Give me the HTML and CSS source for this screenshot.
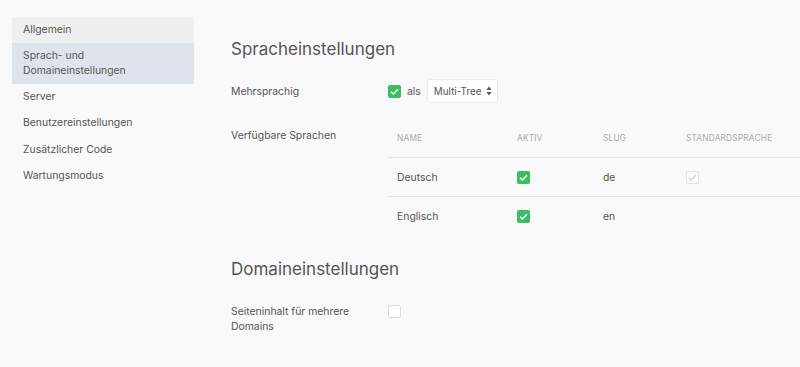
FILE: index.html
```html
<!DOCTYPE html>
<html lang="de">
<head>
<meta charset="utf-8">
<link rel="stylesheet" href="styles.css">
</head>
<body>
<div class="layout">
  <nav class="sidebar">
    <a class="nav-item nav-hover">Allgemein</a>
    <a class="nav-item nav-active">Sprach- und<br>Domaineinstellungen</a>
    <a class="nav-item">Server</a>
    <a class="nav-item">Benutzereinstellungen</a>
    <a class="nav-item">Zusätzlicher Code</a>
    <a class="nav-item">Wartungsmodus</a>
  </nav>
  <main class="main">
    <h2 class="section-title">Spracheinstellungen</h2>
    <div class="form-row row-multi">
      <div class="label">Mehrsprachig</div>
      <div class="control inline">
        <span class="cb cb-on"><svg viewBox="0 0 13 13"><path d="M3 6.8l2.3 2.2L10 4.3" fill="none" stroke="#fff" stroke-width="1.5"/></svg></span>
        <span class="als">als</span>
        <span class="select">Multi-Tree<svg class="arrows" viewBox="0 0 6 10"><path d="M3 0.5L5.6 4H0.4z M3 9.5L5.6 6H0.4z" fill="#555"/></svg></span>
      </div>
    </div>
    <div class="form-row row-lang">
      <div class="label">Verfügbare Sprachen</div>
      <div class="control table">
        <div class="tr th">
          <div class="c1">NAME</div><div class="c2">AKTIV</div><div class="c3">SLUG</div><div class="c4">STANDARDSPRACHE</div>
        </div>
        <div class="tr">
          <div class="c1">Deutsch</div>
          <div class="c2"><span class="cb cb-on"><svg viewBox="0 0 13 13"><path d="M3 6.8l2.3 2.2L10 4.3" fill="none" stroke="#fff" stroke-width="1.5"/></svg></span></div>
          <div class="c3">de</div>
          <div class="c4"><span class="cb cb-dis"><svg viewBox="0 0 13 13"><path d="M3 6.8l2.3 2.2L10 4.3" fill="none" stroke="#ccc" stroke-width="1.2"/></svg></span></div>
        </div>
        <div class="tr">
          <div class="c1">Englisch</div>
          <div class="c2"><span class="cb cb-on"><svg viewBox="0 0 13 13"><path d="M3 6.8l2.3 2.2L10 4.3" fill="none" stroke="#fff" stroke-width="1.5"/></svg></span></div>
          <div class="c3">en</div>
          <div class="c4"></div>
        </div>
      </div>
    </div>
    <h2 class="section-title title-2">Domaineinstellungen</h2>
    <div class="form-row row-domain">
      <div class="label">Seiteninhalt für mehrere<br>Domains</div>
      <div class="control"><span class="cb cb-off"></span></div>
    </div>
  </main>
</div>
</body>
</html>
```
FILE: styles.css
```css
* { box-sizing: border-box; }
html, body { margin: 0; padding: 0; }
body {
  background: #f9f9fb;
  font-family: Inter, "Noto Sans", sans-serif;
  font-size: 10.4px;
  color: #555;
  width: 800px;
  height: 367px;
  overflow: hidden;
}
.layout { display: flex; }
.sidebar {
  width: 182px;
  margin-left: 12px;
  padding-top: 17px;
  display: flex;
  flex-direction: column;
}
.nav-item {
  display: block;
  padding: 5.83px 11px;
  line-height: 14.67px;
  color: #555;
}
.nav-hover { background: #efefef; }
.nav-active { background: #dfe4ec; }
.main {
  padding-left: 37px;
  flex: 1;
}
.section-title {
  font-weight: 400;
  font-size: 17px;
  line-height: 24px;
  margin: 37px 0 0;
  color: #555;
}
.title-2 { margin-top: 22px; }
.form-row { display: flex; }
.label { width: 157px; flex: none; line-height: 15px; }
.row-multi { margin-top: 18px; align-items: center; }
.row-lang { margin-top: 16px; }
.row-lang .label { padding-top: 9px; }
.row-domain { margin-top: 23px; }
.inline { display: flex; align-items: center; }
.cb {
  display: inline-block;
  width: 13px;
  height: 13px;
  border-radius: 2px;
  vertical-align: middle;
}
.cb svg { display: block; width: 13px; height: 13px; }
.cb-on { background: #3dbd62; }
.cb-dis { border: 1px solid #e4e4e4; background: #fbfbfb; }
.cb-dis svg { margin: -1px; }
.cb-off { border: 1px solid #dcdcdc; background: #fff; }
.als { margin-left: 6px; }
.select {
  margin-left: 6px;
  width: 71px;
  height: 24px;
  background: #fff;
  border: 1px solid #ececec;
  border-radius: 3px;
  display: flex;
  align-items: center;
  padding-left: 6px;
  white-space: nowrap;
  font-size: 9.9px;
}
.arrows { width: 6px; height: 10px; margin-left: auto; margin-right: 5px; flex: none; }
.table { flex: 1; }
.tr { display: flex; height: 39px; align-items: center; border-top: 1px solid #e6e6e8; }
.tr.th { border-top: none; height: 38px; font-size: 8.3px; color: #aaa; letter-spacing: 0.2px; }
.c1 { width: 129px; padding-left: 9px; }
.c2 { width: 86px; }
.c3 { width: 83px; }
.c4 { flex: 1; }
```
